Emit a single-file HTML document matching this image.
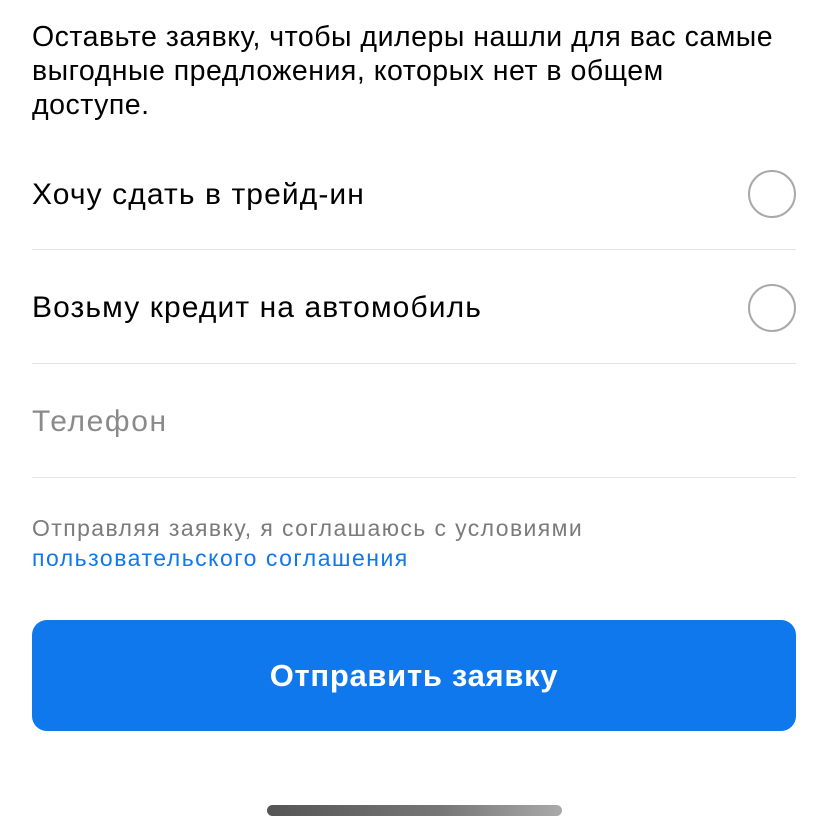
<!DOCTYPE html>
<html><head><meta charset="utf-8"><style>
body{margin:0;width:828px;height:832px;background:#fff;font-family:"Liberation Sans",sans-serif;position:relative;overflow:hidden}
.t{position:absolute;left:32px;white-space:nowrap;color:#000}
.intro{top:20px;font-size:28.5px;line-height:34px;letter-spacing:0.5px}
.row{font-size:30px;letter-spacing:1.1px}
.hr{position:absolute;left:32px;width:764px;height:1px;background:#e4e4e4}
.c{position:absolute;left:748px;width:44px;height:44px;border:2px solid #a9a9a9;border-radius:50%}
.small{font-size:23px;letter-spacing:1.4px;color:#7b7b7b;line-height:30px;top:513px}
.btn{position:absolute;left:32px;top:620px;width:764px;height:111px;background:#0e78ec;border-radius:15px;color:#fff;font-size:31px;font-weight:bold;letter-spacing:0.7px;text-align:center;line-height:111px}
.bar{position:absolute;left:267px;top:805px;width:295px;height:11px;border-radius:6px;background:linear-gradient(90deg,#555,#777 60%,#aaa)}
</style></head><body>
<div class="t intro">Оставьте заявку, чтобы дилеры нашли для вас самые<br>выгодные предложения, которых нет в общем<br>доступе.</div>
<div class="t row" style="top:178px">Хочу сдать в трейд-ин</div>
<div class="c" style="top:170px"></div>
<div class="hr" style="top:249px"></div>
<div class="t row" style="top:291px">Возьму кредит на автомобиль</div>
<div class="c" style="top:284px"></div>
<div class="hr" style="top:363px"></div>
<div class="t row" style="top:405px;color:#8a8a8a;letter-spacing:1.6px">Телефон</div>
<div class="hr" style="top:477px"></div>
<div class="t small">Отправляя заявку, я соглашаюсь с условиями<br><span style="color:#0e78ec;letter-spacing:1.5px">пользовательского соглашения</span></div>
<div class="btn">Отправить заявку</div>
<div class="bar"></div>
</body></html>
